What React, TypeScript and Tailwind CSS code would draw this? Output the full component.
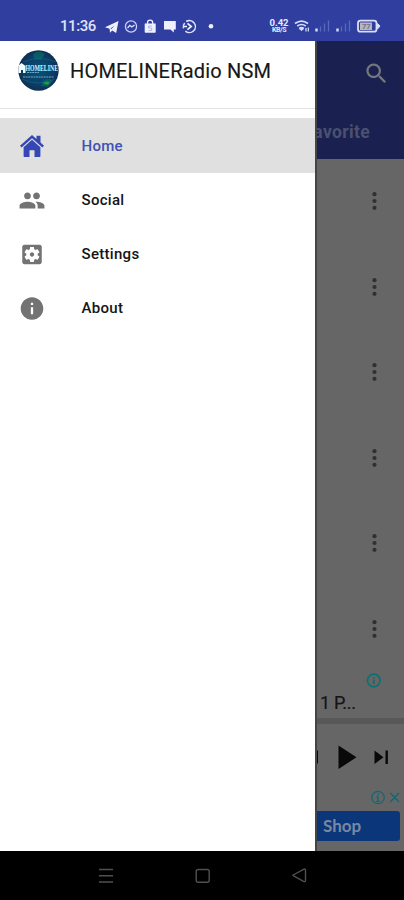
import React from "react";

const dots = [0, 1, 2, 3, 4, 5];

const menu = [
  { label: "Home", icon: "home" },
  { label: "Social", icon: "social" },
  { label: "Settings", icon: "settings" },
  { label: "About", icon: "about" },
];

function MenuIcon({ name }: { name: string }) {
  if (name === "home")
    return (
      <svg className="h-[26px] w-[26px] fill-[#3547b5]" viewBox="0 0 26 26">
        <path d="M13 2 1 12.8l1.6 1.7L13 5.2l10.4 9.3 1.6-1.7-3.5-3.2V2.8h-4v3.3z" />
        <path d="M13 6.8 4.6 14.3V23c0 .6.4 1 1 1h4.9v-6.8h5V24h4.9c.6 0 1-.4 1-1v-8.7z" />
      </svg>
    );
  const paths: Record<string, string> = {
    social:
      "M16 11c1.66 0 2.99-1.34 2.99-3S17.66 5 16 5c-1.66 0-3 1.34-3 3s1.34 3 3 3zm-8 0c1.66 0 2.99-1.34 2.99-3S9.66 5 8 5C6.34 5 5 6.34 5 8s1.34 3 3 3zm0 2c-2.33 0-7 1.17-7 3.5V19h14v-2.5c0-2.33-4.67-3.5-7-3.5zm8 0c-.29 0-.62.02-.97.05 1.16.84 1.97 1.97 1.97 3.45V19h6v-2.5c0-2.33-4.67-3.5-7-3.5z",
    settings:
      "M12 10c-1.1 0-2 .9-2 2s.9 2 2 2 2-.9 2-2-.9-2-2-2zm7-7H5c-1.11 0-2 .9-2 2v14c0 1.1.89 2 2 2h14c1.11 0 2-.9 2-2V5c0-1.1-.89-2-2-2zm-1.75 9c0 .23-.02.46-.05.68l1.48 1.16c.13.11.17.3.08.45l-1.4 2.42c-.09.15-.27.21-.43.15l-1.74-.7c-.36.28-.76.51-1.18.69l-.26 1.85c-.03.17-.18.3-.35.3h-2.8c-.17 0-.32-.13-.35-.29l-.26-1.85c-.43-.18-.82-.41-1.18-.69l-1.74.7c-.16.06-.34 0-.43-.15l-1.4-2.42c-.09-.15-.05-.34.08-.45l1.48-1.16c-.03-.23-.05-.46-.05-.69s.02-.46.05-.68l-1.48-1.16c-.13-.11-.17-.3-.08-.45l1.4-2.42c.09-.15.27-.21.43-.15l1.74.7c.36-.28.76-.51 1.18-.69l.26-1.85c.03-.17.18-.3.35-.3h2.8c.17 0 .32.13.35.29l.26 1.85c.43.18.82.41 1.18.69l1.74-.7c.16-.06.34 0 .43.15l1.4 2.42c.09.15.05.34-.08.45l-1.48 1.16c.03.23.05.46.05.69z",
    about:
      "M12 2C6.48 2 2 6.48 2 12s4.48 10 10 10 10-4.48 10-10S17.52 2 12 2zm1 15h-2v-6h2v6zm0-8h-2V7h2v2z",
  };
  return (
    <svg className="h-[27px] w-[26px] fill-[#737373]" viewBox={name === "social" ? "0.5 0.5 23 23" : name === "about" ? "0.5 0.5 23 23" : "0 0 24 24"}>
      <path d={paths[name]} />
    </svg>
  );
}

function StatusBar() {
  return (
    <header className="h-[41px] shrink-0 bg-[#303f9f] flex items-start pl-[60px] pt-[17px]">
      <span className="w-[45px] text-[15px] leading-[19px] font-medium text-[#dfe2fb] tracking-[-0.45px]">11:36</span>
      <svg className="h-5 w-[112px]" viewBox="105 17 112 20" fill="#eef0ff">
        <path d="M105 27.2 118.5 21l-2.3 12-4-2.5-2.2 2.3-.4-4z" />
        <path d="m110.5 28.6 4-3.2-3 3.7z" fill="#303f9f" />
        <circle cx="131" cy="26.5" r="5.6" fill="none" stroke="#c9cff4" strokeWidth="1.3" />
        <path d="m127.5 28 2.4-2.7 2 1.7 2.6-2" fill="none" stroke="#e0e4ff" strokeWidth="1.3" />
        <path d="M144.7 23.5h11v8.2c0 .7-.4 1-1 1h-9c-.6 0-1-.3-1-1z" />
        <path d="M147.5 24v-1.2a2.6 2.6 0 0 1 5.2 0V24" fill="none" stroke="#eef0ff" strokeWidth="1.3" />
        <path d="M151.7 26h-3v2h3v2.5h-3" fill="none" stroke="#a9afdc" strokeWidth=".9" />
        <path d="M164 21h11.8v8.5h-2v3l-3.4-3H164z" />
        <path d="M186.2 21.5a6 6 0 1 1-.8 9.6M183.4 28.3a6 6 0 0 1 1.3-5.3" fill="none" stroke="#dfe3fc" strokeWidth="1.5" />
        <path d="m187.5 23.3 3.7 3.2-3.7 3.2M184 26.5h3" fill="none" stroke="#eef0ff" strokeWidth="1.7" />
        <circle cx="211" cy="26.2" r="2.3" />
      </svg>
      <div className="ml-[52px] mt-[2px] w-5 text-center text-[#e8eaff] font-bold">
        <div className="text-[9.5px] leading-[8px]">0.42</div>
        <div className="text-[7px] leading-[6px] tracking-[-0.4px]">KB/S</div>
      </div>
      <svg className="ml-1 h-5 w-[90px]" viewBox="293 17 90 20" fill="none" stroke="#d9defa">
        <path d="M295 23.5q6.5-4.7 13 0M297.3 26q4.2-3 8.4 0M299.3 28.5q2.2-1.6 4.4 0" strokeWidth="1.7" />
        <path d="m299.5 28.7 2 2 2-2z" fill="#d9defa" />
        <path d="M306 31.5v-3.5M308.3 27.5v4" strokeWidth="1.2" />
        <path d="M316.5 28.5v3M337.5 28.5v3" strokeWidth="2.4" />
        <path d="M320.5 26.5v5M324.5 23.5v8M328.5 20.5v11M341.5 26.5v5M345.5 23.5v8M349.5 20.5v11" stroke="#5967bd" strokeWidth="1.3" />
        <rect x="358" y="20.7" width="18.5" height="11" rx="2.5" strokeWidth="1.8" />
        <rect x="360" y="22.5" width="12" height="7.5" fill="#b9b4bd" stroke="none" />
        <path d="M377.5 23.5 380 26l-2.5 3z" fill="#d9defa" />
        <text x="362" y="29" fontSize="7.5" fontWeight="700" fill="#6f7191" stroke="none">77</text>
      </svg>
    </header>
  );
}

function Drawer() {
  return (
    <aside className="w-[315px] shrink-0 bg-white">
      <div className="h-[68px] border-b border-[#e3e3e3] flex items-start pl-[18px] pt-[9px]">
        <svg className="h-[41px] w-[41px]" viewBox="0 0 41 41">
          <defs>
            <clipPath id="disc"><circle cx="20.5" cy="20.5" r="20.2" /></clipPath>
            <radialGradient id="ocean"><stop stopColor="#075179" /><stop offset=".7" stopColor="#0b3e66" /><stop offset="1" stopColor="#102e51" /></radialGradient>
          </defs>
          <g clipPath="url(#disc)">
            <rect width="41" height="41" fill="url(#ocean)" />
            <path d="M15 4q6-5 12 0l-4 6-7-1zM25 31q6-4 10 0l-5 6-7-1z" fill="#087b62" opacity=".5" />
            <path d="M5 12Q21 5 38 12M4 29q17 8 33 0" fill="none" stroke="#176e93" opacity=".5" />
            <path d="m0 16 3.5-3 4 3v7H5v-3H3v3H0z" fill="#f0fcff" />
            <text x="7.5" y="20.5" fontFamily="Liberation Serif, serif" fontSize="8.5" fontWeight="700" textLength="32.5" lengthAdjust="spacingAndGlyphs" fill="#d7f2fa">HOMELINE</text>
            <path d="M9 22.5h12M5 27h31" stroke="#7fb4cb" strokeWidth=".9" strokeDasharray="2 .6" />
            <path d="M25 33q4-3 7 0l-3 2z" fill="#1f9a48" />
          </g>
        </svg>
        <h1 className="ml-[11px] mt-[9px] whitespace-nowrap text-[20px] leading-6 font-normal text-[#171717] [-webkit-text-stroke:0.15px_#171717] tracking-[0.18px]">HOMELINERadio NSM</h1>
      </div>
      <nav className="mt-[9px]">
        {menu.map((item, i) => (
          <div key={item.label} className={i === 0 ? "flex h-[55px] items-center bg-[#e0e0e0] pl-[19px] text-[#3f51b5]" : "flex h-[54px] items-center pl-[19px] text-[#151515]"}>
            <MenuIcon name={item.icon} />
            <span className="ml-[36.5px] text-[15px] leading-5 font-medium tracking-[0.3px]">{item.label}</span>
          </div>
        ))}
      </nav>
    </aside>
  );
}

function Backdrop() {
  return (
    <main className="min-w-0 flex-1 overflow-hidden border-l-2 border-[#454545] bg-[#666666]">
      <div className="-ml-[2px] h-[118px] border-l-2 border-[#11163b] bg-[#1a2150]">
        <div className="flex justify-end pr-[14px] pt-[19px]">
          <svg className="h-[27px] w-[27px] fill-[#74767d]" viewBox="0 0 24 24">
            <path d="M15.5 14h-.79l-.28-.27C15.41 12.59 16 11.11 16 9.5 16 5.91 13.09 3 9.5 3S3 5.91 3 9.5 5.91 16 9.5 16c1.61 0 3.09-.59 4.23-1.57l.27.28v.79l5 4.99L20.49 19l-4.99-5zm-6 0C7.01 14 5 11.99 5 9.5S7.01 5 9.5 5 14 7.01 14 9.5 11.99 14 9.5 14z" />
          </svg>
        </div>
        <div className="mr-[34px] mt-[31px] flex justify-end overflow-hidden whitespace-nowrap text-[17.5px] leading-7 font-bold tracking-[0.35px] text-[#4b5070]">Favorite</div>
      </div>
      <div className="h-[513px]">
        {dots.map((d) => (
          <div key={d} className="flex h-[85.5px] justify-end pr-[26px] pt-[32px]">
            <svg className="h-5 w-[7px] fill-[#303030]" viewBox="0 0 7 20">
              <circle cx="3.5" cy="3.2" r="2.1" /><circle cx="3.5" cy="10" r="2.1" /><circle cx="3.5" cy="16.8" r="2.1" />
            </svg>
          </div>
        ))}
      </div>
      <div className="h-[46px] pt-px">
        <svg className="ml-[49px] h-4 w-4" viewBox="0 0 16 16" fill="none" stroke="#087273" strokeWidth="1.7">
          <circle cx="7.8" cy="7.5" r="6.3" /><path d="M7.8 6.5V11M7.8 4v1.5" />
        </svg>
        <div className="ml-[3px] mt-[2px] text-[18px] leading-6 tracking-[-0.25px] text-[#141414] [-webkit-text-stroke:0.2px_#141414]">1 P...</div>
      </div>
      <div className="h-[6px] bg-[#585858]" />
      <div className="h-[62px]">
        <svg className="h-[62px] w-[87px] fill-[#090909]" viewBox="317 724 87 62">
          <path d="M317 750.5h1v13h-1zM338.5 745.5v23.5l18-11.7zM374.5 750.5v13.5l9-6.7zM385.5 750.5h2.4v13.5h-2.4z" />
        </svg>
      </div>
      <div className="flex h-[25px] justify-end pr-1 pt-1">
        <svg className="h-[15px] w-[29px]" viewBox="0 0 29 15" fill="none" stroke="#10686f" strokeWidth="1.3">
          <circle cx="7" cy="7.5" r="6.2" /><path d="M7 6.5v5M7 3.5v1.7M5.5 6.8H7M5.3 11.3h3.4M19.3 3l8.7 9M28 3l-8.7 9" />
        </svg>
      </div>
      <button className="block h-[30px] w-[83px] rounded-r-[3px] bg-[#0b367a] pl-[6px] text-left font-[Lato] text-[17px] leading-[30px] font-bold text-[#7888a2]">Shop</button>
    </main>
  );
}

function SystemNav() {
  return (
    <footer className="flex h-[49px] shrink-0 justify-center bg-black">
      <svg className="h-[49px] w-[404px]" viewBox="0 851 404 49" fill="none" stroke="#505050" strokeWidth="1.4">
        <path d="M99 869.5h14M99 875.7h14M99 882h14" />
        <rect x="196.2" y="869.5" width="13" height="12.8" rx="2" />
        <path d="m293.2 875 10.3-5.7q2-1 2 1v10q0 2-2 1l-10.3-5.7q-.7-.3 0-.6z" />
      </svg>
    </footer>
  );
}

export default function App() {
  return (
    <div className="flex h-[900px] w-[404px] flex-col overflow-hidden bg-black font-[Roboto]">
      <StatusBar />
      <div className="flex h-[810px] shrink-0 overflow-hidden"><Drawer /><Backdrop /></div>
      <SystemNav />
    </div>
  );
}
